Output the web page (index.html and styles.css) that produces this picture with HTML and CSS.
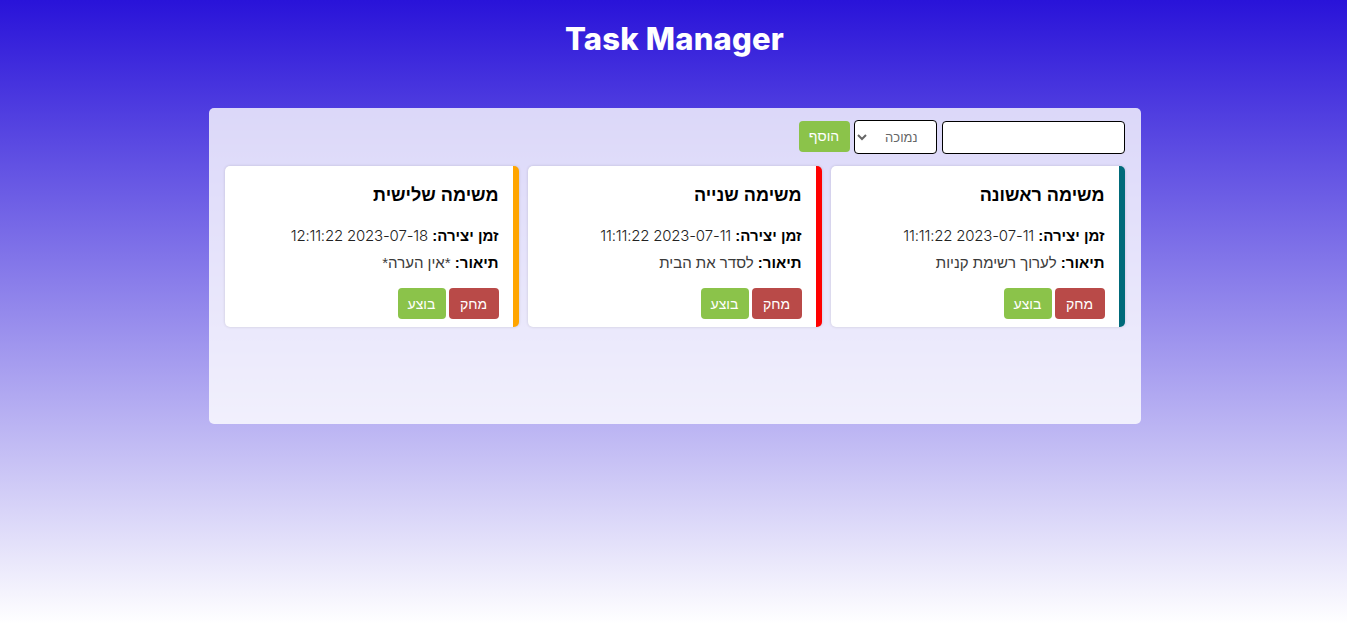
FILE: index.html
```html
<!DOCTYPE html>
<html lang="he">
<head>
<meta charset="utf-8">
<title>Task Manager</title>
<link rel="stylesheet" href="styles.css">
</head>
<body>
<h1 class="page-title">Task Manager</h1>
<main class="board" dir="rtl">
  <div class="toolbar">
    <input class="task-input" type="text">
    <select class="priority">
      <option>נמוכה</option>
    </select>
    <button class="btn btn-add">הוסף</button>
  </div>
  <div class="cards">
    <div class="card card-teal">
      <h3 class="card-title">משימה ראשונה</h3>
      <p class="line"><b>זמן יצירה:</b> <span class="val num">2023-07-11 11:11:22</span></p>
      <p class="line"><b>תיאור:</b> <span class="val">לערוך רשימת קניות</span></p>
      <div class="actions">
        <button class="btn btn-del">מחק</button>
        <button class="btn btn-done">בוצע</button>
      </div>
    </div>
    <div class="card card-red">
      <h3 class="card-title">משימה שנייה</h3>
      <p class="line"><b>זמן יצירה:</b> <span class="val num">2023-07-11 11:11:22</span></p>
      <p class="line"><b>תיאור:</b> <span class="val">לסדר את הבית</span></p>
      <div class="actions">
        <button class="btn btn-del">מחק</button>
        <button class="btn btn-done">בוצע</button>
      </div>
    </div>
    <div class="card card-orange">
      <h3 class="card-title">משימה שלישית</h3>
      <p class="line"><b>זמן יצירה:</b> <span class="val num">2023-07-18 12:11:22</span></p>
      <p class="line"><b>תיאור:</b> <span class="val">*אין הערה*</span></p>
      <div class="actions">
        <button class="btn btn-del">מחק</button>
        <button class="btn btn-done">בוצע</button>
      </div>
    </div>
  </div>
</main>
</body>
</html>
```

FILE: styles.css
```css
html, body {
  height: 100%;
}
body {
  margin: 0;
  padding: 8px 0 0;
  box-sizing: border-box;
  min-height: 624px;
  background: linear-gradient(to bottom, #2913d9 0%, #ffffff 100%);
  font-family: Inter, "Liberation Sans", sans-serif;
  color: #000;
}
.page-title {
  margin: 12px 0 0;
  text-align: center;
  color: #fff;
  font-family: Inter, "Liberation Sans", sans-serif;
  font-weight: 800;
  font-size: 31px;
  line-height: 38px;
  letter-spacing: 0.2px;
  position: relative;
  left: 1px;
}
.board {
  width: 932px;
  box-sizing: border-box;
  min-height: 316px;
  margin: 50px auto 0;
  position: relative;
  left: 1px;
  padding: 12px 16px 16px;
  background: rgba(255, 255, 255, 0.8);
  border-radius: 5px;
}
.toolbar {
  display: flex;
  align-items: center;
  gap: 4px;
  height: 34px;
}
.task-input {
  width: 183px;
  height: 33px;
  box-sizing: border-box;
  border: 1px solid #000;
  border-radius: 4px;
  background: #fff;
  margin: 0 0 0 1px;
  padding: 0 6px;
}
.priority {
  width: 83px;
  height: 34px;
  box-sizing: border-box;
  border: 1px solid #000;
  border-radius: 4px;
  background: #fff;
  color: #666;
  font-family: "Liberation Sans", sans-serif;
  font-size: 13px;
  padding: 0 14px 0 4px;
  margin: 0;
}
.btn {
  border: none;
  border-radius: 4px;
  color: #fff;
  font-family: "Liberation Sans", sans-serif;
  font-size: 14px;
  height: 31px;
  padding: 0 12px;
  cursor: pointer;
}
.btn-add {
  background: #8bc34a;
  width: 51px;
  padding: 0;
  position: relative;
  top: -1px;
}
.cards {
  display: grid;
  grid-template-columns: repeat(3, 1fr);
  gap: 9px;
  margin-top: 12px;
}
.card {
  background: #fff;
  border-radius: 5px;
  border-right: 6px solid #006a7a;
  box-shadow: 0 0 3px rgba(0, 0, 0, 0.15);
  padding: 18px 14px 8px;
  height: 161px;
  box-sizing: border-box;
}
.card-teal { border-right-color: #006a7a; }
.card-red { border-right-color: #ff0000; }
.card-orange { border-right-color: #ffa500; }
.card-title {
  margin: 0 0 16px;
  font-family: "Liberation Sans", sans-serif;
  font-size: 18px;
  font-weight: 700;
  line-height: 22px;
}
.line {
  margin: 0;
  font-size: 15px;
  line-height: 27px;
  font-family: "Liberation Sans", sans-serif;
}
.line b {
  font-weight: 700;
}
.val {
  font-family: "Liberation Sans", sans-serif;
  color: #3a3a3a;
}
.val.num {
  font-family: Inter, "Liberation Sans", sans-serif;
  font-weight: 300;
  font-size: 15px;
  letter-spacing: -0.2px;
  color: #222;
}
.actions {
  display: flex;
  gap: 3px;
  margin-top: 12px;
}
.btn-del {
  background: #b94a48;
  width: 50px;
  padding: 0;
}
.btn-done {
  background: #8bc34a;
  width: 48px;
  padding: 0;
}
```
